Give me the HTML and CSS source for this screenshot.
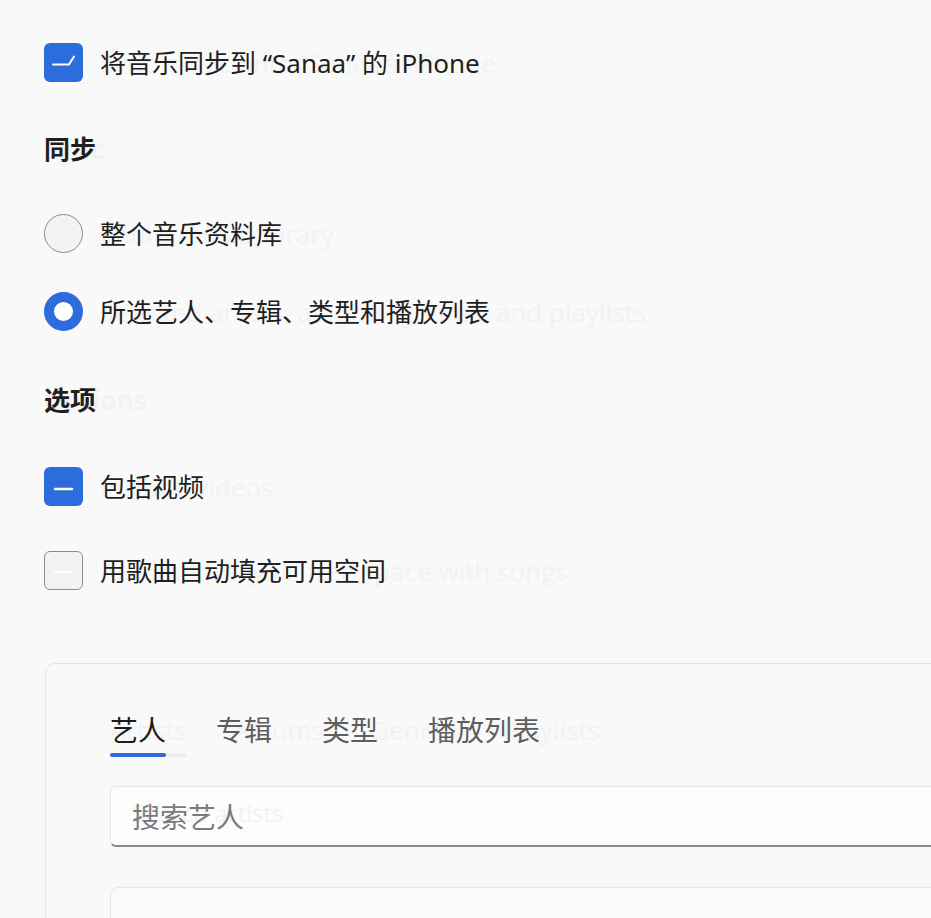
FILE: index.html
```html
<!DOCTYPE html>
<html lang="zh-CN">
<head>
  <meta charset="UTF-8">
  <meta name="viewport" content="width=device-width, initial-scale=1.0">
  <title>同步音乐</title>
  <link rel="stylesheet" href="styles.css">
</head>
<body>
  <div class="page">

    <div class="option sync-toggle">
      <span class="box checked">
        <svg width="39" height="39" viewBox="0 0 39 39"><path d="M9 21.5 H25 L30 13.5" fill="none" stroke="#fff" stroke-width="2" stroke-linecap="round" stroke-linejoin="round"/></svg>
      </span>
      <span class="label">
        <span class="ghost toggle-ghost">Sync music onto “Sanaa’s” iPhone</span>
        <span class="text">将音乐同步到 “Sanaa” 的 iPhone</span>
      </span>
    </div>

    <h2 class="heading sync-heading">
      <span class="label">
        <span class="ghost">Sync</span>
        <span class="text">同步</span>
      </span>
    </h2>

    <div class="option radio-first">
      <span class="radio off"></span>
      <span class="label">
        <span class="ghost">Entire music library</span>
        <span class="text">整个音乐资料库</span>
      </span>
    </div>

    <div class="option radio-second">
      <span class="radio on"></span>
      <span class="label">
        <span class="ghost">Selected artists, albums, genres, and playlists</span>
        <span class="text">所选艺人、专辑、类型和播放列表</span>
      </span>
    </div>

    <h2 class="heading options-heading">
      <span class="label">
        <span class="ghost">Options</span>
        <span class="text">选项</span>
      </span>
    </h2>

    <div class="option videos">
      <span class="box checked">
        <svg width="39" height="39" viewBox="0 0 39 39"><path d="M11 22 H28" fill="none" stroke="#fff" stroke-width="2.5" stroke-linecap="round"/></svg>
      </span>
      <span class="label">
        <span class="ghost">Include videos</span>
        <span class="text">包括视频</span>
      </span>
    </div>

    <div class="option autofill">
      <span class="box empty">
        <svg width="36" height="36" viewBox="0 0 36 36"><path d="M10 20 H26" fill="none" stroke="#fdfdfd" stroke-width="2.5" stroke-linecap="round"/></svg>
      </span>
      <span class="label">
        <span class="ghost">Automatically fill free space with songs</span>
        <span class="text">用歌曲自动填充可用空间</span>
      </span>
    </div>

    <div class="card">
      <div class="tabs-stack">
        <div class="tabs ghost-tabs">
          <span class="tab ghost-tab active">Artists</span>
          <span class="tab ghost-tab">Albums</span>
          <span class="tab ghost-tab">Genres</span>
          <span class="tab ghost-tab">Playlists</span>
        </div>
        <div class="tabs">
          <span class="tab active">艺人</span>
          <span class="tab">专辑</span>
          <span class="tab">类型</span>
          <span class="tab">播放列表</span>
        </div>
      </div>

      <div class="search">
        <span class="label">
          <span class="ghost search-ghost">Search artists</span>
          <span class="placeholder">搜索艺人</span>
        </span>
      </div>

      <div class="list"></div>
    </div>

  </div>
</body>
</html>
```

FILE: styles.css
```css
body {
  margin: 0;
  background-color: #f9f9f9;
  color: #1f1f1f;
  font-family: "Noto Sans", "Noto Sans CJK SC", sans-serif;
  overflow: hidden;
}

.page {
  height: 918px;
  padding: 43px 0 0 44px;
  box-sizing: border-box;
}

/* ghost english text sits behind the chinese label */
.label {
  display: grid;
}

.label > span {
  grid-area: 1 / 1;
  white-space: nowrap;
}

.ghost {
  color: #f2f2f2;
  font-family: "Open Sans", sans-serif;
  font-size: 26px;
}

.toggle-ghost {
  font-size: 25.5px;
}

.option {
  display: flex;
  align-items: center;
  gap: 17px;
  height: 39px;
  font-size: 26px;
  line-height: 36px;
}

.heading {
  margin: 0;
  height: 36px;
  font-size: 26px;
  font-weight: 700;
  line-height: 36px;
}

.heading .ghost {
  font-weight: 700;
}

.sync-heading {
  margin-top: 49px;
}

.radio-first {
  margin-top: 47px;
}

.radio-second {
  margin-top: 39px;
}

.options-heading {
  margin-top: 51px;
}

.videos {
  margin-top: 49px;
}

.autofill {
  margin-top: 45px;
}

.box {
  flex: none;
  display: flex;
  width: 39px;
  height: 39px;
  border-radius: 6px;
  box-sizing: border-box;
}

.box.checked {
  background-color: #2c6cdc;
}

.box.empty {
  border: 1.5px solid #8c8c8c;
  background-color: #f3f3f3;
}

.radio {
  flex: none;
  width: 39px;
  height: 39px;
  border-radius: 50%;
  box-sizing: border-box;
}

.radio.off {
  border: 1.5px solid #8d8d8d;
  background-color: #f3f3f3;
}

.radio.on {
  border: 10px solid #2c6cdc;
  background-color: #fff;
}

.card {
  width: 1000px;
  height: 400px;
  margin: 73px 0 0 1px;
  padding: 48px 0 0 64px;
  border: 1px solid #e4e4e4;
  border-radius: 10px;
  box-sizing: border-box;
}

.tabs-stack {
  display: grid;
}

.tabs-stack > .tabs {
  grid-area: 1 / 1;
}

.tabs {
  display: flex;
  gap: 50px;
  font-size: 28px;
  line-height: 36px;
}

.tab {
  display: flex;
  flex-direction: column;
  color: #5e5e5e;
}

.tab::after {
  content: "";
  height: 4px;
  margin-top: 5px;
  border-radius: 2px;
}

.tab.active {
  color: #1b1b1b;
}

.tab.active::after {
  background-color: #2c6cdc;
}

.ghost-tabs {
  gap: 46px;
}

.ghost-tab,
.ghost-tab.active {
  color: #f2f2f2;
  font-family: "Open Sans", sans-serif;
  font-size: 26px;
}

.ghost-tab.active::after {
  background-color: #eeeeee;
}

.search {
  display: flex;
  align-items: center;
  height: 61px;
  margin-top: 29px;
  padding-left: 21px;
  border: 1px solid #e6e6e6;
  border-bottom: 2px solid #8a8a8a;
  border-radius: 6px;
  background-color: #fdfdfd;
  box-sizing: border-box;
  font-size: 28px;
}

.search-ghost {
  font-size: 24px;
}

.placeholder {
  color: #7b7b7b;
}

.list {
  height: 120px;
  margin-top: 40px;
  border: 1px solid #e6e6e6;
  border-radius: 8px;
  background-color: #fafafa;
}
```
